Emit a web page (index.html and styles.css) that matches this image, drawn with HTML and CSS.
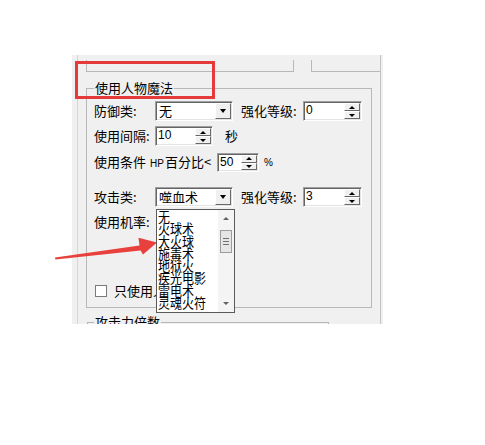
FILE: index.html
```html
<!DOCTYPE html>
<html lang="zh-CN">
<head>
<meta charset="utf-8">
<title>使用人物魔法</title>
<link rel="stylesheet" href="styles.css">
</head>
<body>
<div class="panel">
  <div class="frame">
    <div class="topboxes">
      <div class="tb1"></div>
      <div class="tb2"></div>
    </div>
    <fieldset class="g1">
      <legend>使用人物魔法</legend>
      <div class="row r1">
        <span class="lbl">防御类:</span>
        <div class="combo"><span class="cv">无</span><span class="dbtn"><i class="tri-dn"></i></span></div>
        <span class="lbl2">强化等级:</span>
        <div class="spin w59"><span class="v">0</span><span class="sb"><span class="half"><i class="t-up"></i></span><span class="half"><i class="t-dn"></i></span></span></div>
      </div>
      <div class="row r2">
        <span class="lbl">使用间隔:</span>
        <div class="spin w58"><span class="v">10</span><span class="sb"><span class="half"><i class="t-up"></i></span><span class="half"><i class="t-dn"></i></span></span></div>
        <span class="sec">秒</span>
      </div>
      <div class="row r3">
        <span class="cond">使用条件<span class="hp">HP</span>百分比&lt;</span>
        <div class="spin w42"><span class="v">50</span><span class="sb"><span class="half"><i class="t-up"></i></span><span class="half"><i class="t-dn"></i></span></span></div>
        <span class="pct">%</span>
      </div>
      <div class="row r4">
        <span class="lbl">攻击类:</span>
        <div class="combo open"><span class="cv">噬血术</span><span class="dbtn"><i class="tri-dn"></i></span>
          <div class="dd">
            <div class="items">
              <div>无</div>
              <div>火球术</div>
              <div>大火球</div>
              <div>施毒术</div>
              <div>地狱火</div>
              <div>疾光电影</div>
              <div>雷电术</div>
              <div>灵魂火符</div>
            </div>
            <div class="sbar">
              <div class="arr"><i class="s-up"></i></div>
              <div class="track"><div class="thumb"><i></i><i></i><i></i></div></div>
              <div class="arr"><i class="s-dn"></i></div>
            </div>
          </div>
        </div>
        <span class="lbl2">强化等级:</span>
        <div class="spin w59"><span class="v">3</span><span class="sb"><span class="half"><i class="t-up"></i></span><span class="half"><i class="t-dn"></i></span></span></div>
      </div>
      <div class="row r5">
        <span class="lbl">使用机率:</span>
      </div>
      <div class="row r6">
        <span class="cb"></span>
        <span class="cbl">只使用人物魔法</span>
      </div>
    </fieldset>
    <fieldset class="g2">
      <legend>攻击力倍数</legend>
      <div class="g2body"></div>
    </fieldset>
  </div>
</div>
<div class="redbox"></div>
<svg class="arrow" width="485" height="445" viewBox="0 0 485 445">
  <polygon points="55,257.6 139.5,245.4 138.5,237.8 157,242.6 143,254.6 140.6,250.6 55.4,259.6" fill="#e8403c"/>
</svg>
</body>
</html>
```
FILE: styles.css
```css
html, body {
  margin: 0;
  padding: 0;
}
body {
  width: 485px;
  height: 445px;
  background: #fff;
  position: relative;
  overflow: hidden;
  font-family: "Noto Sans CJK SC", "Noto Sans", sans-serif;
  font-size: 13px;
  color: #000;
}
.panel {
  margin: 55px 0 0 72px;
  width: 311px;
  height: 269px;
  background: #f0f0f0;
  overflow: hidden;
}
.frame {
  margin-left: 5px;
  width: 304px;
  height: 100%;
  box-sizing: border-box;
  border-left: 1px solid #d6d6d6;
  border-right: 1px solid #c4c4c4;
  padding-top: 5px;
}
.topboxes {
  display: flex;
  height: 12px;
}
.tb1 {
  margin-left: 8px;
  width: 208px;
  box-sizing: border-box;
  border: 1px solid #b8b8b8;
  border-top: none;
}
.tb2 {
  margin-left: 17px;
  flex: 1;
  border-left: 1px solid #b8b8b8;
  border-bottom: 1px solid #b8b8b8;
}
fieldset {
  margin: 0;
  min-width: 0;
  box-sizing: border-box;
  border: 1px solid #b8b8b8;
}
legend {
  padding: 0 1px;
  line-height: 14px;
  font-size: 13px;
}
.g1 {
  margin: 9px 0 0 8px;
  width: 286px;
  padding: 0 0 8px 7px;
}
.row {
  display: flex;
  align-items: center;
  height: 20px;
  line-height: 16px;
  white-space: nowrap;
}
.r1 { margin-top: 6px; }
.r2 { margin-top: 5px; }
.r3 { margin-top: 7px; height: 19px; }
.r4 { margin-top: 15px; }
.r5 { margin-top: 7px; height: 16px; }
.r6 { margin-top: 53px; height: 16px; }
.lbl { width: 61px; }
.lbl2 { margin-left: 8px; width: 62px; }
.sec { margin-left: 12px; }
.cond {
  display: block;
  width: 123px;
}
.hp {
  font-family: "Liberation Sans", sans-serif;
  font-size: 10px;
  margin-left: 4px;
  margin-right: 1px;
}
.pct {
  font-family: "Liberation Sans", sans-serif;
  font-size: 10px;
  margin-left: 5px;
}
.combo, .spin {
  position: relative;
  display: flex;
  height: 100%;
  box-sizing: border-box;
  background: #fff;
  border: 1px solid;
  border-color: #a0a0a0 #fff #fff #a0a0a0;
  box-shadow: inset 1px 1px 0 #646464, inset -1px -1px 0 #e3e3e3;
}
.combo { width: 78px; }
.cv {
  flex: 1;
  padding-left: 3px;
  line-height: 18px;
}
.dbtn, .sb {
  margin: 1px 1px 1px 0;
  display: flex;
}
.dbtn {
  width: 16px;
  background: #f0f0f0;
  box-sizing: border-box;
  border: 1px solid;
  border-color: #fff #696969 #696969 #fff;
  align-items: center;
  justify-content: center;
}
.tri-dn {
  width: 0;
  height: 0;
  border-left: 3.5px solid transparent;
  border-right: 3.5px solid transparent;
  border-top: 4px solid #000;
}
.w59 { width: 59px; }
.w58 { width: 58px; }
.w42 { width: 42px; }
.v {
  flex: 1;
  font-family: "Liberation Sans", sans-serif;
  font-size: 12px;
  line-height: 17px;
  padding-left: 2px;
}
.sb {
  width: 16px;
  flex-direction: column;
}
.half {
  flex: 1;
  background: #f0f0f0;
  box-sizing: border-box;
  border: 1px solid;
  border-color: #fff #696969 #696969 #fff;
  display: flex;
  align-items: center;
  justify-content: center;
}
.t-up, .t-dn {
  width: 0;
  height: 0;
  border-left: 3px solid transparent;
  border-right: 3px solid transparent;
}
.t-up { border-bottom: 3px solid #000; }
.t-dn { border-top: 3px solid #000; }
.cb {
  margin-left: 1px;
  width: 12px;
  height: 12px;
  box-sizing: border-box;
  background: #fff;
  border: 1px solid #7a7a7a;
}
.cbl { margin-left: 7px; }
.dd {
  position: absolute;
  left: 0;
  top: 21px;
  width: 79px;
  height: 104px;
  box-sizing: border-box;
  background: #fff;
  border: 1px solid #5a5a5a;
  display: flex;
  z-index: 2;
}
.items {
  flex: 1;
  padding-left: 1px;
  font-size: 12px;
  line-height: 12.3px;
  overflow: hidden;
}
.items div {
  height: 12.3px;
  transform: scaleY(1.18);
  transform-origin: 0 30%;
}
.sbar {
  width: 16px;
  background: #f4f4f4;
  display: flex;
  flex-direction: column;
}
.arr {
  height: 17px;
  display: flex;
  align-items: center;
  justify-content: center;
}
.s-up, .s-dn {
  width: 0;
  height: 0;
  border-left: 3px solid transparent;
  border-right: 3px solid transparent;
}
.s-up { border-bottom: 3px solid #606060; }
.s-dn { border-top: 3px solid #606060; }
.track {
  flex: 1;
  padding-top: 3px;
}
.thumb {
  margin: 0 2px;
  height: 23px;
  box-sizing: border-box;
  border: 1px solid #9c9c9c;
  background: #e6e6e6;
  display: flex;
  flex-direction: column;
  align-items: center;
  justify-content: center;
  gap: 2px;
}
.thumb i {
  width: 6px;
  height: 1px;
  background: #707070;
}
.g2 {
  margin: 7px 0 0 9px;
  width: 242px;
  padding: 0 0 0 6px;
}
.g2body { height: 40px; }
.redbox {
  position: absolute;
  left: 75px;
  top: 61px;
  width: 140px;
  height: 38px;
  box-sizing: border-box;
  border: 3px solid #e53a3a;
}
.arrow {
  position: absolute;
  left: 0;
  top: 0;
  pointer-events: none;
}
```
